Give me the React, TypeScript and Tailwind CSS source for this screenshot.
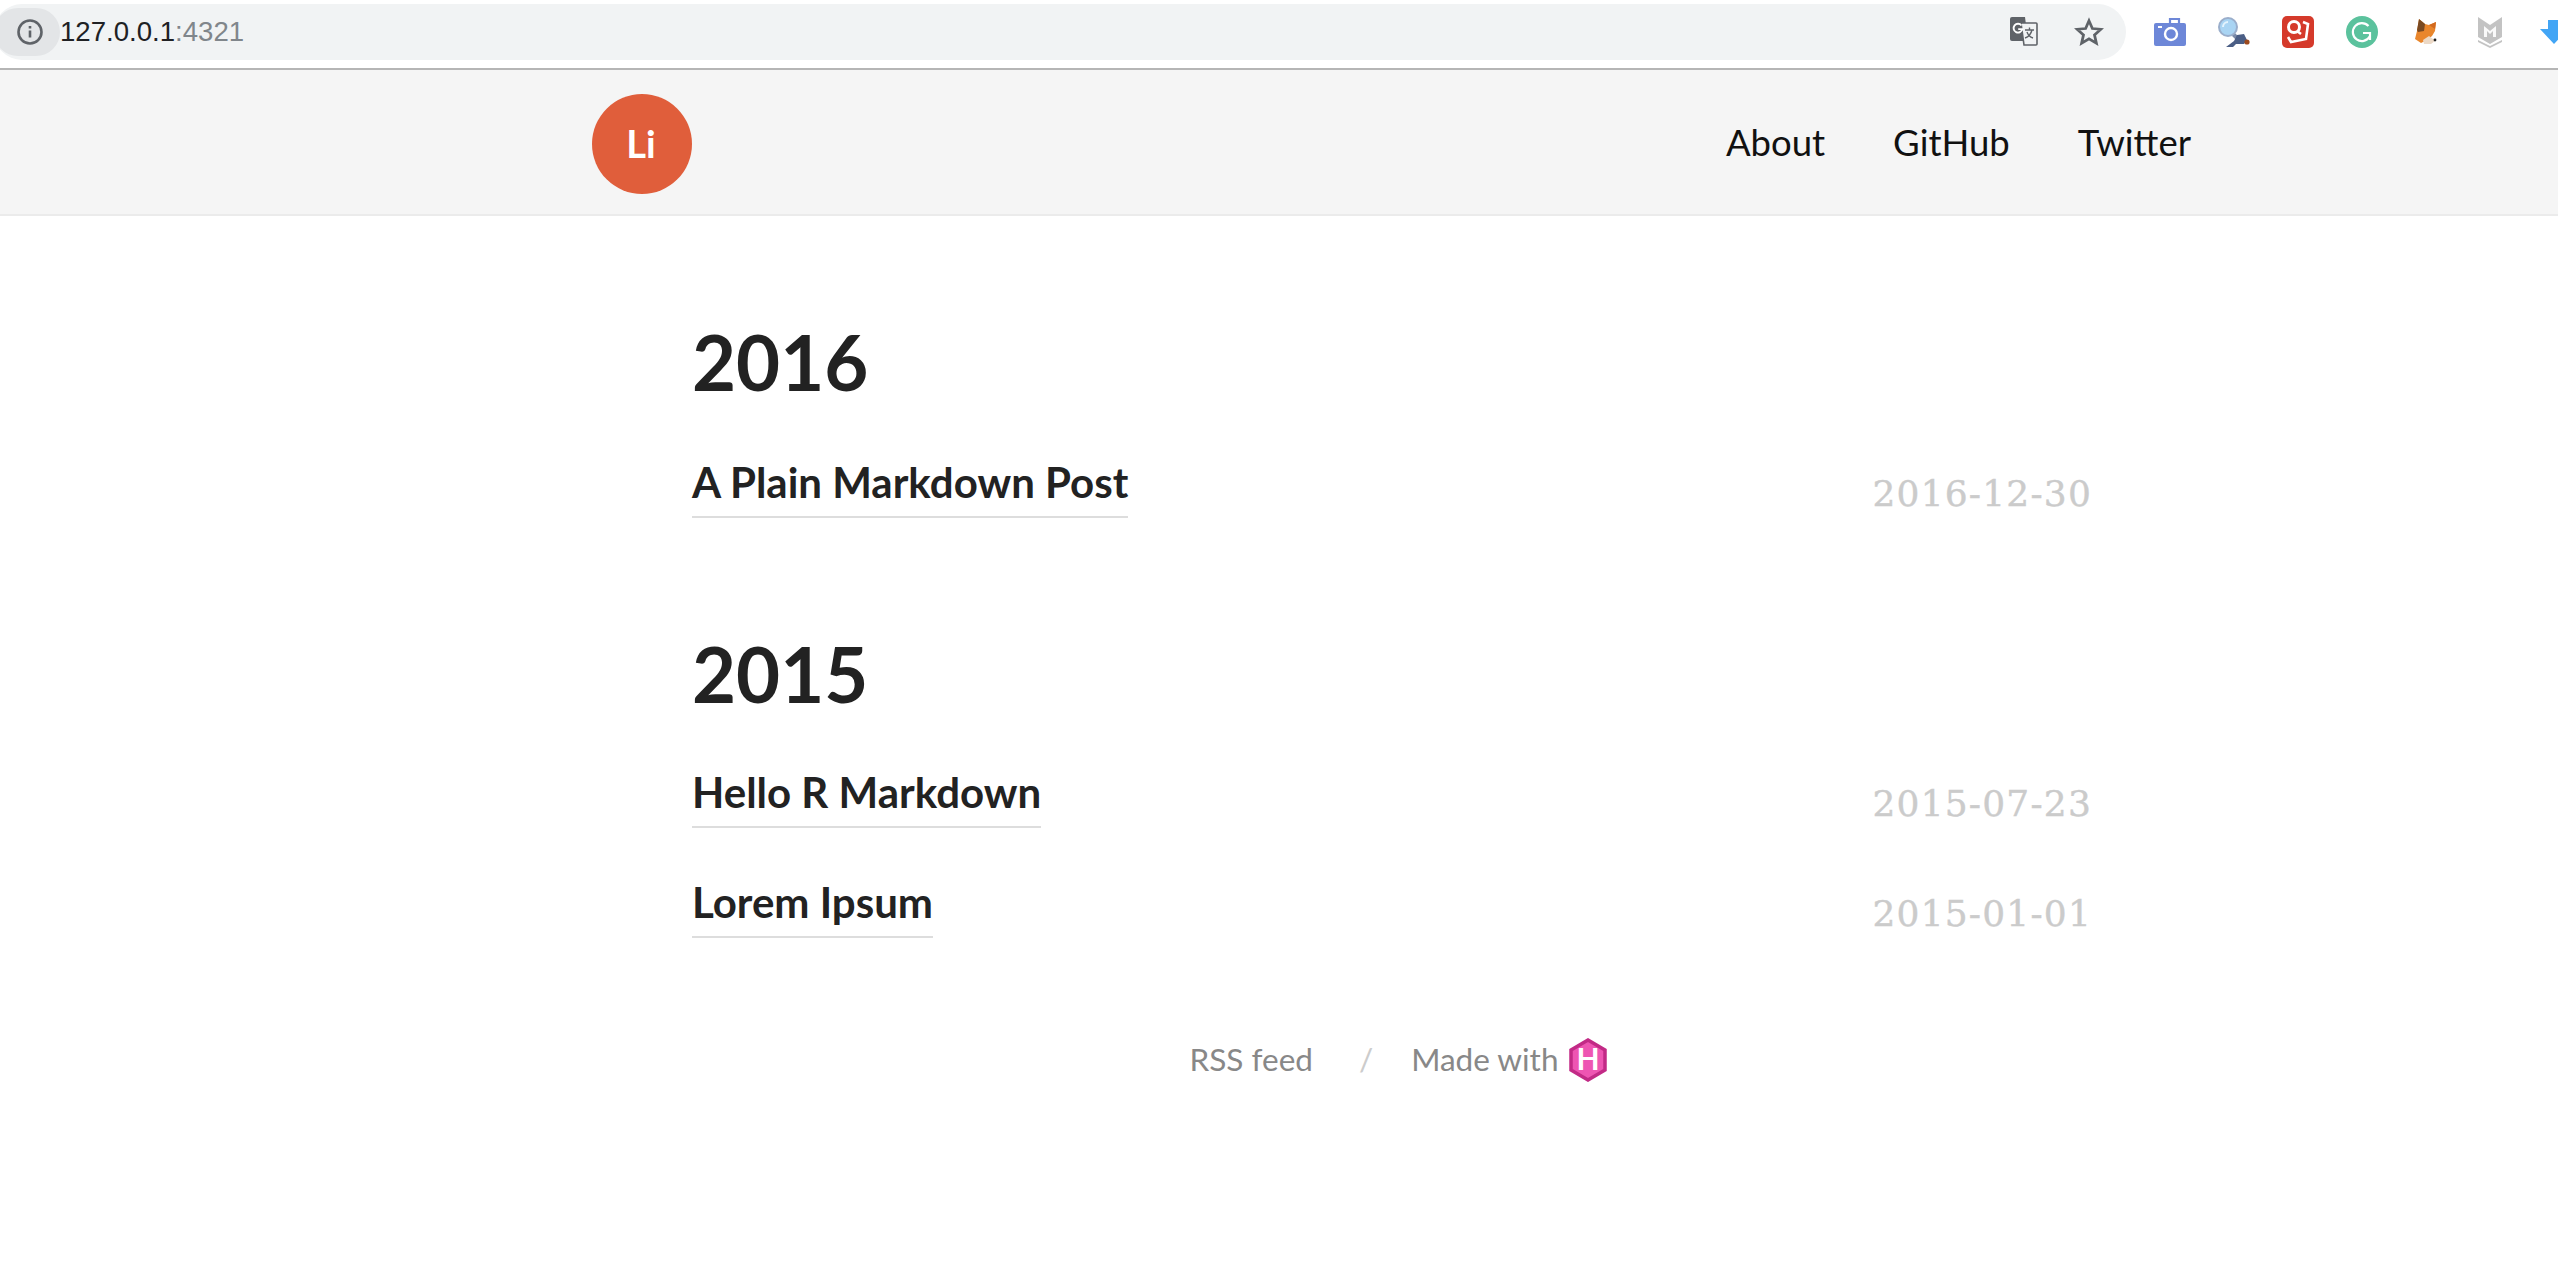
import React from 'react';

const lato = { fontFamily: 'Lato, sans-serif' };
const dateFont = { fontFamily: '"DejaVu Serif", serif' };

function Toolbar() {
  return (
    <div className="h-[70px] w-full bg-white border-b-2 border-[#b5b5b5] flex items-start pt-[4px] overflow-hidden">
      <div className="w-[2132px] -ml-[6px] shrink-0 h-[56px] bg-[#f1f3f4] rounded-full flex items-center">
        <div className="w-[66px] h-[48px] rounded-full bg-[#e3e5e7] flex items-center justify-center pl-[6px]">
          <svg width="28" height="28" viewBox="0 0 28 28" fill="none" stroke="#5f6368" strokeWidth="2.6"><circle cx="14" cy="14" r="11.5" /><path d="M14 12.5v7M14 8v2.5" /></svg>
        </div>
        <div className="text-[27.6px] text-[#202124]" style={{ fontFamily: '"Liberation Sans", sans-serif' }}>127.0.0.1<span className="text-[#80868b]">:4321</span></div>
        <div className="ml-auto flex items-center gap-[36px] pr-[22px]">
          <svg width="28" height="30" viewBox="0 0 28 30">
            <path d="M2 0h13l3 24H2a2 2 0 0 1-2-2V2a2 2 0 0 1 2-2z" fill="#5f6368" />
            <path d="M11 6h15a1 1 0 0 1 1 1v20a1 1 0 0 1-1 1H14l-3-22z" fill="#f1f3f4" stroke="#5f6368" strokeWidth="1.6" />
            <path d="M15 13h9M19.5 10.5V13M22 13c-1 4-4 7-7 8M17 15c1 3 3 5 6 6" stroke="#5f6368" strokeWidth="1.4" fill="none" />
            <path d="M11.5 8.5a4.4 4.4 0 1 0 .8 3.6H8.2" stroke="#fff" strokeWidth="1.9" fill="none" />
          </svg>
          <svg width="30" height="30" viewBox="0 0 24 24" fill="none" stroke="#5f6368" strokeWidth="2.2"><path d="M12 3l2.7 6.2 6.8.6-5.1 4.5 1.5 6.6L12 17.4l-5.9 3.5 1.5-6.6-5.1-4.5 6.8-.6z" /></svg>
        </div>
      </div>
      <div className="ml-[12px] flex shrink-0">
        <ExtIcon>
          <svg width="32" height="28" viewBox="0 0 32 28">
            <path d="M16 5V1h9v4" fill="none" stroke="#6d87d8" strokeWidth="2.2" />
            <rect x="0" y="5" width="32" height="23" rx="2" fill="#6d87d8" />
            <circle cx="17" cy="16" r="6" fill="none" stroke="#fff" strokeWidth="2.4" />
            <rect x="4" y="8" width="4" height="2" fill="#fff" />
          </svg>
        </ExtIcon>
        <ExtIcon>
          <svg width="32" height="30" viewBox="0 0 32 30">
            <path d="M15 17l5 5" stroke="#7a8aa8" strokeWidth="4" />
            <circle cx="10" cy="10" r="9" fill="#a9d4f3" stroke="#9aaecb" strokeWidth="2" />
            <path d="M5 10a5 5 0 0 1 5-5" stroke="#e4f3fd" strokeWidth="2" fill="none" />
            <path d="M8 30l8-6 3-6 7-1 3 6-3 4-8 0-3 3z" fill="#4b5e85" />
            <circle cx="29" cy="25" r="2.6" fill="#9c4a1e" />
          </svg>
        </ExtIcon>
        <ExtIcon>
          <svg width="32" height="32" viewBox="0 0 32 32">
            <rect width="32" height="32" rx="5" fill="#d53a2b" />
            <circle cx="12" cy="11" r="5.5" fill="none" stroke="#fff" strokeWidth="3" />
            <path d="M15 15l4 3M21 6l5 2-2 15-15 3-3-5" fill="none" stroke="#fff" strokeWidth="2.6" />
          </svg>
        </ExtIcon>
        <ExtIcon>
          <svg width="32" height="32" viewBox="0 0 32 32">
            <circle cx="16" cy="16" r="16" fill="#5bc29d" />
            <path d="M22.5 10a9 9 0 1 0 1.2 10.5" fill="none" stroke="#fff" strokeWidth="2.2" />
            <path d="M17 17h7v7" fill="none" stroke="#fff" strokeWidth="2.2" />
          </svg>
        </ExtIcon>
        <ExtIcon>
          <svg width="22" height="26" viewBox="0 0 22 26">
            <path d="M2 12L4 0l6 5 4 1 7-3-1 9-3 5-5 4-6 3-6-4z" fill="#e9862c" />
            <path d="M4 0l6 5-1 7-6 1-1-2z" fill="#7a4a22" />
            <path d="M14 6l7-3-1 7z" fill="#d2691e" />
            <path d="M8 21l6-4 4 3 3 1-5 4H9z" fill="#ecd9c6" />
            <circle cx="20" cy="21" r="1.4" fill="#222" />
          </svg>
        </ExtIcon>
        <ExtIcon>
          <svg width="24" height="32" viewBox="0 0 24 32">
            <path d="M0 1l12 8 12-8v20l-12 7L0 21z" fill="#c3c3c3" />
            <path d="M6 10l6 5 6-5v11h-3v-6l-3 3-3-3v6H6z" fill="#fafafa" />
            <path d="M0 24l12 6 12-6v2l-12 6-12-6z" fill="#c3c3c3" />
          </svg>
        </ExtIcon>
        <ExtIcon>
          <svg width="28" height="24" viewBox="0 0 28 24">
            <path d="M8 0h12v9h8L14 24 0 9h8z" fill="#42a5f5" />
          </svg>
        </ExtIcon>
      </div>
    </div>
  );
}

function ExtIcon({ children }: { children: React.ReactNode }) {
  return <div className="w-[64px] h-[56px] flex items-center justify-center shrink-0">{children}</div>;
}

function PostRow({ title, date }: { title: string; date: string }) {
  return (
    <div className="flex justify-between items-start mt-[48px]">
      <div className="text-[42px] font-bold leading-[52px] pb-[8px] border-b-2 border-[#ddd]">{title}</div>
      <div className="text-[36px] leading-none text-[#cbcbcb] tracking-[1.2px] mt-[20px] [-webkit-text-stroke:0.4px_#cbcbcb]" style={dateFont}>{date}</div>
    </div>
  );
}

export default function App() {
  return (
    <div className="min-h-[1276px] bg-white overflow-hidden" style={lato}>
      <Toolbar />
      <div className="w-[2784px]">
        <header className="h-[146px] bg-[#f5f5f5] border-b-2 border-[#ebebeb]">
          <div className="w-[1600px] mx-auto flex items-center h-full">
            <div className="w-[100px] h-[100px] mt-[3px] rounded-full bg-[#e05e3b] flex items-center justify-center text-white text-[38px] font-bold pr-[2px]">Li</div>
            <nav className="ml-auto flex gap-[68px] text-[36.5px] text-[#111] pr-[1px]">
              <span>About</span>
              <span>GitHub</span>
              <span>Twitter</span>
            </nav>
          </div>
        </header>
        <main className="w-[1400px] mx-auto text-[#222]">
          <section className="pt-[100px]">
            <h2 className="text-[76px] font-bold leading-[92px]">2016</h2>
            <PostRow title="A Plain Markdown Post" date="2016-12-30" />
          </section>
          <section className="pt-[110px]">
            <h2 className="text-[76px] font-bold leading-[92px] -mb-[2px]">2015</h2>
            <PostRow title="Hello R Markdown" date="2015-07-23" />
            <PostRow title="Lorem Ipsum" date="2015-01-01" />
          </section>
        </main>
        <footer className="flex justify-center items-center pl-[14px] mt-[98px] text-[31.5px] text-[#888]">
          <span>RSS feed</span>
          <span className="ml-[46px] mr-[38px] text-[#ccc]">/</span>
          <span>Made with</span>
          <svg className="ml-[10px]" width="40" height="44" viewBox="0 0 40 44">
            <path d="M20 2l17 10v20L20 42 3 32V12z" fill="#ee55b2" stroke="#c22a86" strokeWidth="3.5" />
            <text x="20" y="32" textAnchor="middle" fontSize="30" fontWeight="700" fill="#fff" fontFamily="Lato, sans-serif">H</text>
          </svg>
        </footer>
      </div>
    </div>
  );
}
